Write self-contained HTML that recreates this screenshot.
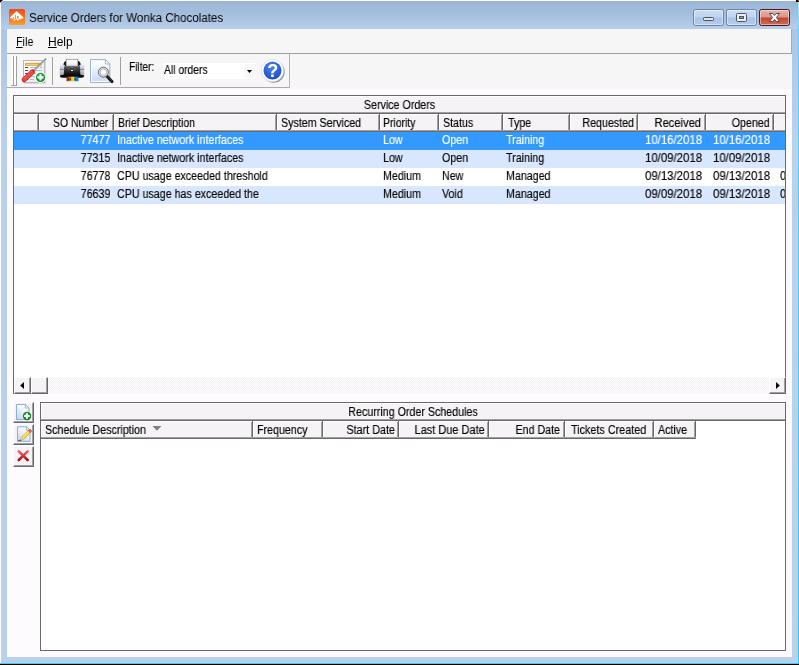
<!DOCTYPE html>
<html lang="en">
<head>
<meta charset="utf-8">
<title>Service Orders for Wonka Chocolates</title>
<style>
html,body{margin:0;padding:0;}
body{width:799px;height:665px;overflow:hidden;position:relative;background:#bad1ec;font-family:"Liberation Sans",sans-serif;font-size:11px;color:#000;}
.abs{position:absolute;}
#win{position:absolute;left:0;top:0;width:799px;height:665px;overflow:hidden;background:#bad1ec;}
#titlegrad{left:1px;top:1px;width:797px;height:28px;background:linear-gradient(#9ab5d4 0,#a5bedd 45%,#b7ceeb 100%);}
#edgeL{left:0;top:0;width:1px;height:663px;background:#fff;}
#edgeT{left:0;top:0;width:799px;height:1px;background:#fff;}
#edgeR{left:798px;top:0;width:1px;height:664px;background:linear-gradient(#b8f2ff 0,#5fd4f6 30px,#2fc6f1 100%);}
#edgeB1{left:0;top:663px;width:799px;height:1px;background:#3ccdf3;}
#edgeB2{left:0;top:664px;width:799px;height:1px;background:#000;}
#title{left:29px;top:11px;font-size:12px;line-height:15px;white-space:nowrap;transform:scaleX(.965);transform-origin:0 0;}
#client{left:7px;top:29px;width:785px;height:628px;background:#fdfbfd;}
#menubar{left:7px;top:29px;width:785px;height:24px;background:#f6f6f6;}
#menuline{left:7px;top:53px;width:785px;height:1px;background:#a0a0a0;}
.menu{position:absolute;top:35px;font-size:12px;line-height:15px;white-space:nowrap;}
.menu u{text-decoration:underline;text-underline-offset:1px;}
#toolbar{left:7px;top:54px;width:785px;height:35px;background:#f6f6f6;}
#toolline{left:7px;top:87px;width:283px;height:1px;background:#a9a9a9;}
#toolright{left:289px;top:54px;width:1px;height:34px;background:#b4b4b4;}
.vsep{position:absolute;width:1px;background:#a0a0a0;}
.cap{position:absolute;top:9px;height:15px;border:1px solid #6d85a8;border-radius:2.5px;background:linear-gradient(#c9dcf3 0,#bed4ef 48%,#a7c3e6 52%,#b3cdee 100%);box-shadow:inset 0 0 0 1px rgba(255,255,255,.45);}
#cclose{border-color:#4a1820;background:linear-gradient(#e8b2a6 0,#dc9485 48%,#c2452e 52%,#cf6d56 100%);}
.grid{position:absolute;background:#fff;}
.dk{background:#696969;position:absolute;}
.btn{position:absolute;left:13px;width:21px;height:21px;background:#f5f3f5;border-left:1px solid #fff;border-top:1px solid #fff;border-right:1px solid #696969;border-bottom:1px solid #696969;box-sizing:border-box;}

.t{position:absolute;font-size:12px;line-height:14px;white-space:nowrap;transform:scaleX(.89);transform-origin:0 0;}
.tr{position:absolute;font-size:12px;line-height:14px;white-space:nowrap;transform:scaleX(.89);transform-origin:100% 0;}
.tc{position:absolute;font-size:12px;line-height:14px;white-space:nowrap;transform:scaleX(.89);transform-origin:50% 0;text-align:center;}
.face{position:absolute;background:#f5f3f5;}
.hcell{position:absolute;box-sizing:border-box;background:#f5f3f5;border-left:1px solid #fff;border-top:1px solid #fff;}
.hcell:before{content:"";position:absolute;right:0;top:-1px;bottom:0;width:1px;background:#696969;}
.hcell:after{content:"";position:absolute;right:1px;top:0;bottom:0;width:1px;background:#a0a0a0;}
.w{color:#fff;}
.t,.tr,.tc,#title,.menu{will-change:transform;}
.t,.tr,.tc{-webkit-text-stroke:.15px currentColor;}
.d{transform:scaleX(.95);}
</style>
</head>
<body>
<div id="win">
<div class="abs" id="titlegrad"></div>
<div class="abs" style="left:1px;top:29px;width:6px;height:110px;background:linear-gradient(#adc6e7,#bad1ec);"></div>
<div class="abs" style="left:792px;top:29px;width:6px;height:110px;background:linear-gradient(#adc6e7,#bad1ec);"></div>
<div class="abs" id="edgeT"></div>
<div class="abs" id="edgeL"></div>
<div class="abs" id="edgeR"></div>
<div class="abs" id="edgeB1"></div>
<div class="abs" id="edgeB2"></div>
<svg class="abs" style="left:0;top:0" width="4" height="4" viewBox="0 0 4 4"><path d="M0 0 L3 0 L0 3 Z" fill="#000"/><path d="M1 2.6 L2.6 1" stroke="#fff" stroke-width=".7"/></svg>
<div class="abs" style="left:796px;top:0;width:3px;height:2px;background:#000;"></div><div class="abs" style="left:798px;top:0;width:1px;height:1px;background:#f08a10;"></div>
<svg class="abs" style="left:9px;top:9px" width="16" height="16" viewBox="0 0 16 16">
<defs><linearGradient id="ag" x1="0" y1="0" x2="0" y2="1"><stop offset="0" stop-color="#f34a1c"/><stop offset=".55" stop-color="#f6741e"/><stop offset="1" stop-color="#f9a02c"/></linearGradient></defs>
<rect x="0" y="0" width="16" height="16" rx="1.5" fill="url(#ag)"/>
<path d="M7.6 2 L14.3 8.3 L14.3 9.6 L12 9.6 L11.5 10.4 L9.6 10.2 L9.4 12 L8.6 10.4 L7.2 10.3 L7 11.6 L6.2 10.3 L4.2 10.4 L3.4 9.6 L1.2 9.2 L1.2 8.3 Z" fill="#fff"/>
<rect x="5.9" y="6" width="1" height="4" fill="#f6862a"/><rect x="7.9" y="7" width="1.6" height="2.6" fill="#f6862a"/><rect x="4" y="8" width="1" height="2" fill="#f8a050"/>
<rect x="4.6" y="11" width="1.2" height="1" fill="#fde3c4"/><rect x="8" y="10.6" width="1" height="1.2" fill="#fff"/>
</svg>
<div class="abs" id="title">Service Orders for Wonka Chocolates</div>
<div class="cap" style="left:693px;width:29px;"><svg class="abs" style="left:9px;top:7px" width="11" height="4" viewBox="0 0 11 4"><rect x=".5" y=".5" width="10" height="3" rx=".8" fill="#e4e4e6" stroke="#4e5560"/></svg></div>
<div class="cap" style="left:726px;width:29px;"><svg class="abs" style="left:9px;top:3px" width="11" height="9" viewBox="0 0 11 9"><rect x=".5" y=".5" width="10" height="8" rx="1" fill="#eceef2" stroke="#4e5560"/><rect x="3.5" y="3.5" width="4" height="2" fill="#86a3cb" stroke="#4e5560"/></svg></div>
<div class="cap" id="cclose" style="left:759px;width:29px;"><svg class="abs" style="left:9px;top:3px" width="11" height="9" viewBox="0 0 11 9"><path d="M0.5 0.5 L3.8 0.5 L5.5 2.5 L7.2 0.5 L10.5 0.5 L7.5 4.5 L10.5 8.5 L7.2 8.5 L5.5 6.5 L3.8 8.5 L0.5 8.5 L3.5 4.5 Z" fill="#fff" stroke="#4f4752" stroke-width="1" stroke-linejoin="round"/></svg></div>
<div class="abs" id="client"></div>
<div class="abs" id="menubar"></div>
<div class="abs" id="menuline"></div>
<div class="abs" style="left:791px;top:29px;width:1px;height:25px;background:#a8a8a8;"></div>
<div class="menu" style="left:16px;transform:scaleX(.9);transform-origin:0 0;"><u>F</u>ile</div>
<div class="menu" style="left:48px"><u>H</u>elp</div>
<div class="abs" id="toolbar"></div>
<div class="abs" id="toolline"></div>
<div class="abs" id="toolright"></div>
<div class="abs" style="left:11px;top:56px;width:2px;height:29px;background:#fff;"></div><div class="abs" style="left:14px;top:56px;width:2px;height:29px;background:#fff;"></div><div class="vsep" style="left:13px;top:56px;height:30px;"></div><div class="vsep" style="left:16px;top:56px;height:30px;"></div><div class="abs" style="left:11px;top:85px;width:6px;height:1px;background:#a0a0a0;"></div>
<div class="vsep" style="left:52px;top:57px;height:28px;"></div><div class="vsep" style="left:120px;top:57px;height:28px;"></div>
<svg class="abs" style="left:20px;top:56px" width="30" height="30" viewBox="0 0 30 30">
<defs><linearGradient id="i1p" x1="0" y1="0" x2="1" y2="1"><stop offset="0" stop-color="#ffffff"/><stop offset="1" stop-color="#e4e6ee"/></linearGradient>
<linearGradient id="i1r" x1="0" y1="0" x2="1" y2="1"><stop offset="0" stop-color="#f2564a"/><stop offset="1" stop-color="#b81818"/></linearGradient>
<radialGradient id="i1g" cx=".4" cy=".35" r=".7"><stop offset="0" stop-color="#30b848"/><stop offset="1" stop-color="#0a7a1c"/></radialGradient></defs>
<rect x="4" y="5" width="21.5" height="22.5" fill="#9a9aa4" opacity=".55"/>
<rect x="3.5" y="4.5" width="21" height="22" fill="url(#i1p)" stroke="#b4b6c2"/>
<rect x="5" y="6.8" width="16.6" height="3" fill="#dfa62e"/><rect x="6" y="7.9" width="12" height=".9" fill="#f3d88c"/>
<g stroke="#4a4c58" stroke-width="1"><path d="M5 11.5h3.2M5 14.5h3.2M5 17.5h3.2M5 20.5h3.2M5 23.5h3.2"/></g>
<g stroke="#b9bcc8" stroke-width="1"><path d="M10 11.5h9M20 11.5h2.2M10 14.5h12M10 17.5h6M10 20.5h5M10 23.5h4"/></g>
<path d="M13.2 15.2 L25.6 3.2" stroke="#7f8d94" stroke-width="1.7" stroke-linecap="round"/>
<path d="M14 14.6 L25.2 3.6" stroke="#c8d2d6" stroke-width=".6"/>
<path d="M4.2 23.6 L12.4 16" stroke="#c4201c" stroke-width="5" stroke-linecap="round"/>
<path d="M4.2 23.4 L12.2 16" stroke="#e8483c" stroke-width="3.2" stroke-linecap="round"/>
<path d="M3.6 22.6 L11.6 15.2 M5.2 24.6 L13 17.2" stroke="#f6a29a" stroke-width=".8" stroke-dasharray="1 1"/>
<circle cx="20.5" cy="21.4" r="5.6" fill="#fff"/><circle cx="20.5" cy="21.4" r="4.6" fill="url(#i1g)"/>
<path d="M19.4 18.3h2.2v2h2v2.2h-2v2h-2.2v-2h-2v-2.2h2z" fill="#fff"/>
</svg>
<svg class="abs" style="left:56px;top:56px" width="30" height="30" viewBox="0 0 30 30">
<defs><linearGradient id="p1" x1="0" y1="0" x2="0" y2="1"><stop offset="0" stop-color="#ffffff"/><stop offset=".6" stop-color="#f4f4f6"/><stop offset="1" stop-color="#a8a8ae"/></linearGradient>
<linearGradient id="p2" x1="0" y1="0" x2="0" y2="1"><stop offset="0" stop-color="#5a5a62"/><stop offset=".5" stop-color="#2a2a2e"/><stop offset="1" stop-color="#050505"/></linearGradient>
<linearGradient id="p3" x1="0" y1="0" x2="0" y2="1"><stop offset="0" stop-color="#e6e8ee"/><stop offset=".36" stop-color="#c0c2ca"/><stop offset=".42" stop-color="#7c7e86"/><stop offset=".5" stop-color="#c8cad2"/><stop offset="1" stop-color="#9a9ca4"/></linearGradient>
<linearGradient id="p4" x1="0" y1="0" x2="1" y2="0"><stop offset="0" stop-color="#7a2a08"/><stop offset=".2" stop-color="#d84a10"/><stop offset=".45" stop-color="#f8c818"/><stop offset=".6" stop-color="#f0e020"/><stop offset=".7" stop-color="#2a90d8"/><stop offset="1" stop-color="#1a68c8"/></linearGradient></defs>
<path d="M7.4 10.6 Q6.8 7 9.6 5 L10.4 5 L10.4 10.6 Z M24.8 10.6 Q25.4 7 22.6 5 L21.8 5 L21.8 10.6 Z" fill="#141416"/>
<rect x="10.2" y="3.3" width="11.6" height="8" fill="url(#p1)" stroke="#85858c" stroke-width=".7"/>
<rect x="3.8" y="8.8" width="5" height="11.4" rx="1" fill="url(#p3)"/><rect x="23.4" y="8.8" width="4.8" height="11.4" rx="1" fill="url(#p3)"/>
<path d="M8.2 10.2 L24 10.2 L24.4 19.8 L7.8 19.8 Z" fill="url(#p2)"/>
<rect x="12" y="11.6" width="2.2" height="2.6" fill="#4c4c54"/><rect x="17.8" y="11.6" width="2.2" height="2.6" fill="#4c4c54"/><rect x="14.6" y="11" width="3" height="1" fill="#6c6c74"/>
<rect x="15" y="14" width="2" height="1" fill="#f4f4f4"/>
<path d="M3.8 20 Q3.8 19.2 5 19.2 L8 18.4 L24.2 18.4 L27 19.2 Q28.2 19.2 28.2 20 Q28.2 21.7 25.4 21.7 L6.6 21.7 Q3.8 21.7 3.8 20 Z" fill="#0a0a0a"/>
<rect x="10.6" y="20.7" width="11.8" height="4.6" fill="url(#p4)"/>
<path d="M11.4 21.6 l1.8 1.4 l-1 1.8 z M14 21.2 l1.2 2.6 l-1.6 .8z M19 21 l1 3.6 l-1.6-.6z" fill="#2a1208" opacity=".8"/>
<rect x="10.6" y="25.2" width="11.8" height=".6" fill="#dfe3ec"/>
</svg>
<svg class="abs" style="left:86px;top:56px" width="30" height="30" viewBox="0 0 30 30">
<defs><linearGradient id="v1" x1="0" y1="0" x2="0" y2="1"><stop offset="0" stop-color="#ffffff"/><stop offset=".3" stop-color="#f2f5fd"/><stop offset="1" stop-color="#c6d6f6"/></linearGradient>
</defs>
<path d="M4.5 3.6 L19.4 3.6 L23.8 8 L23.8 26.4 L4.5 26.4 Z" fill="url(#v1)" stroke="#97b1c6" stroke-width="1"/>
<path d="M5.5 4.6 L5.5 25.4 L22.8 25.4" fill="none" stroke="#fff" stroke-width="1"/>
<path d="M19.4 3.6 L19.4 8 L23.8 8 Z" fill="#f8fafd" stroke="#97b1c6" stroke-width=".9" stroke-linejoin="round"/>
<path d="M20.6 19.8 L26 25.6" stroke="#111" stroke-width="3" stroke-linecap="round"/>
<path d="M21.6 20.2 L26 25" stroke="#555" stroke-width=".7" stroke-linecap="round"/>
<circle cx="17.4" cy="16.2" r="5" fill="#e2e2e2" stroke="#5c5c5c" stroke-width=".9"/><circle cx="17.4" cy="16.2" r="3.2" fill="#fff" stroke="#a4a4a4" stroke-width=".8"/>
</svg>
<div class="t" style="left:129px;top:60px;transform:scaleX(.84);">Filter:</div>
<div class="abs" style="left:164px;top:63px;width:91px;height:16px;background:#fff;"></div>
<div class="abs" style="left:245px;top:64px;width:10px;height:14px;background:#f8f8f8;"></div>
<div class="t" style="left:164px;top:63px;transform:scaleX(.86);">All orders</div>
<svg class="abs" style="left:247px;top:70px" width="5" height="3" viewBox="0 0 5 3"><path d="M0 0 L5 0 L2.5 3 Z" fill="#000"/></svg>
<svg class="abs" style="left:258px;top:56px;will-change:transform" width="30" height="30" viewBox="0 0 30 30">
<defs><radialGradient id="h1" cx=".45" cy=".3" r=".8"><stop offset="0" stop-color="#4f86ea"/><stop offset=".6" stop-color="#2a5fd2"/><stop offset="1" stop-color="#1c49b4"/></radialGradient></defs>
<circle cx="15.7" cy="15.8" r="11" fill="#77777f" opacity=".8"/>
<circle cx="14.5" cy="14.6" r="11.2" fill="#fff" stroke="#c4d0e8" stroke-width=".6"/>
<circle cx="14.5" cy="14.6" r="9" fill="url(#h1)"/>
<text x="14.7" y="21" text-anchor="middle" font-family="Liberation Sans, sans-serif" font-weight="bold" font-size="18" fill="#fff">?</text>
</svg>
<div class="grid" style="left:13px;top:95px;width:773px;height:299px;"></div>
<div class="dk" style="left:13px;top:95px;width:773px;height:1px;"></div>
<div class="dk" style="left:13px;top:95px;width:1px;height:299px;"></div>
<div class="dk" style="left:785px;top:95px;width:1px;height:299px;"></div>
<div class="face" style="left:14px;top:96px;width:771px;height:16px;border-top:1px solid #fff;border-left:1px solid #fff;box-sizing:border-box;"></div>
<div class="abs" style="left:14px;top:112px;width:771px;height:1px;background:#a0a0a0;"></div>
<div class="abs" style="left:14px;top:113px;width:771px;height:1px;background:#696969;"></div>
<div class="tc" style="left:14px;width:771px;top:98px;">Service Orders</div>
<div class="abs" style="left:14px;top:130px;width:771px;height:1px;background:#a0a0a0;"></div>
<div class="abs" style="left:14px;top:131px;width:771px;height:1px;background:#696969;"></div>
<div class="hcell" style="left:14px;top:114px;width:25px;height:16px;"></div>
<div class="hcell" style="left:39px;top:114px;width:75px;height:16px;"></div>
<div class="tr" style="right:690.5px;top:116px;transform:scaleX(.875);">SO Number</div>
<div class="hcell" style="left:114px;top:114px;width:163px;height:16px;"></div>
<div class="t" style="left:118px;top:116px;transform:scaleX(.875);">Brief Description</div>
<div class="hcell" style="left:277px;top:114px;width:103px;height:16px;"></div>
<div class="t" style="left:281px;top:116px;">System Serviced</div>
<div class="hcell" style="left:380px;top:114px;width:59px;height:16px;"></div>
<div class="t" style="left:383px;top:116px;transform:scaleX(.87);">Priority</div>
<div class="hcell" style="left:439px;top:114px;width:64px;height:16px;"></div>
<div class="t" style="left:442.5px;top:116px;">Status</div>
<div class="hcell" style="left:503px;top:114px;width:67px;height:16px;"></div>
<div class="t" style="left:508px;top:116px;">Type</div>
<div class="hcell" style="left:570px;top:114px;width:68px;height:16px;"></div>
<div class="tr" style="right:165px;top:116px;">Requested</div>
<div class="hcell" style="left:638px;top:114px;width:68px;height:16px;"></div>
<div class="tr" style="right:97.5px;top:116px;transform:scaleX(.93);">Received</div>
<div class="hcell" style="left:706px;top:114px;width:68px;height:16px;"></div>
<div class="tr" style="right:29px;top:116px;">Opened</div>
<div class="face" style="left:774px;top:114px;width:11px;height:16px;box-sizing:border-box;border-left:1px solid #fff;border-top:1px solid #fff;"></div>
<div class="abs" style="left:14px;top:132px;width:771px;height:18px;background:#3399ff;overflow:hidden;">
<div class="tr w" style="right:675px;top:1px;">77477</div>
<div class="t w" style="left:102.5px;top:1px;">Inactive network interfaces</div>
<div class="t w" style="left:368.5px;top:1px;">Low</div>
<div class="t w" style="left:427.5px;top:1px;">Open</div>
<div class="t w" style="left:492px;top:1px;">Training</div>
<div class="tr w d" style="right:83px;top:1px;">10/16/2018</div>
<div class="tr w d" style="right:15px;top:1px;">10/16/2018</div>
</div>
<div class="abs" style="left:14px;top:150px;width:771px;height:18px;background:#d8e7fe;overflow:hidden;">
<div class="tr" style="right:675px;top:1px;">77315</div>
<div class="t" style="left:102.5px;top:1px;">Inactive network interfaces</div>
<div class="t" style="left:368.5px;top:1px;">Low</div>
<div class="t" style="left:427.5px;top:1px;">Open</div>
<div class="t" style="left:492px;top:1px;">Training</div>
<div class="tr d" style="right:83px;top:1px;">10/09/2018</div>
<div class="tr d" style="right:15px;top:1px;">10/09/2018</div>
</div>
<div class="abs" style="left:14px;top:168px;width:771px;height:18px;background:#ffffff;overflow:hidden;">
<div class="tr" style="right:675px;top:1px;">76778</div>
<div class="t" style="left:102.5px;top:1px;">CPU usage exceeded threshold</div>
<div class="t" style="left:368.5px;top:1px;">Medium</div>
<div class="t" style="left:427.5px;top:1px;">New</div>
<div class="t" style="left:492px;top:1px;">Managed</div>
<div class="tr d" style="right:83px;top:1px;">09/13/2018</div>
<div class="tr d" style="right:15px;top:1px;">09/13/2018</div>
<div class="t" style="left:766px;top:1px;">09/13/2018</div>
</div>
<div class="abs" style="left:14px;top:186px;width:771px;height:18px;background:#d8e7fe;overflow:hidden;">
<div class="tr" style="right:675px;top:1px;">76639</div>
<div class="t" style="left:102.5px;top:1px;">CPU usage has exceeded the</div>
<div class="t" style="left:368.5px;top:1px;">Medium</div>
<div class="t" style="left:427.5px;top:1px;">Void</div>
<div class="t" style="left:492px;top:1px;">Managed</div>
<div class="tr d" style="right:83px;top:1px;">09/09/2018</div>
<div class="tr d" style="right:15px;top:1px;">09/13/2018</div>
<div class="t" style="left:766px;top:1px;">09/13/2018</div>
</div>
<div class="abs" style="left:14px;top:377px;width:771px;height:17px;background:repeating-conic-gradient(#fff 0 25%,#f0f0f0 0 50%) 0 0/2px 2px;"></div>
<div class="abs" style="left:14px;top:377px;width:17px;height:17px;background:#f5f3f5;box-sizing:border-box;border-left:1px solid #fff;border-top:1px solid #fff;border-right:1px solid #696969;border-bottom:1px solid #696969;"><div class="abs" style="right:0;bottom:0;top:0;width:1px;background:#a0a0a0;"></div><div class="abs" style="left:0;right:0;bottom:0;height:1px;background:#a0a0a0;"></div><svg class="abs" style="left:5px;top:4px" width="4" height="7" viewBox="0 0 4 7"><path d="M4 0 L4 7 L0.2 3.5 Z" fill="#000"/></svg></div>
<div class="abs" style="left:31px;top:377px;width:17px;height:17px;background:#f5f3f5;box-sizing:border-box;border-left:1px solid #fff;border-top:1px solid #fff;border-right:1px solid #696969;border-bottom:1px solid #696969;"><div class="abs" style="right:0;bottom:0;top:0;width:1px;background:#a0a0a0;"></div><div class="abs" style="left:0;right:0;bottom:0;height:1px;background:#a0a0a0;"></div></div>
<div class="abs" style="left:769px;top:377px;width:17px;height:17px;background:#f5f3f5;box-sizing:border-box;border-left:1px solid #fff;border-top:1px solid #fff;border-right:1px solid #696969;border-bottom:1px solid #696969;"><div class="abs" style="right:0;bottom:0;top:0;width:1px;background:#a0a0a0;"></div><div class="abs" style="left:0;right:0;bottom:0;height:1px;background:#a0a0a0;"></div><svg class="abs" style="left:6px;top:4px" width="4" height="7" viewBox="0 0 4 7"><path d="M0 0 L0 7 L3.8 3.5 Z" fill="#000"/></svg></div>
<div class="grid" style="left:40px;top:402px;width:746px;height:249px;"></div>
<div class="dk" style="left:40px;top:402px;width:746px;height:1px;"></div>
<div class="dk" style="left:40px;top:402px;width:1px;height:249px;"></div>
<div class="dk" style="left:785px;top:402px;width:1px;height:249px;"></div>
<div class="dk" style="left:40px;top:650px;width:746px;height:1px;"></div>
<div class="face" style="left:41px;top:403px;width:744px;height:16px;border-top:1px solid #fff;border-left:1px solid #fff;box-sizing:border-box;"></div>
<div class="abs" style="left:41px;top:419px;width:744px;height:1px;background:#a0a0a0;"></div>
<div class="abs" style="left:41px;top:420px;width:744px;height:1px;background:#696969;"></div>
<div class="tc" style="left:41px;width:744px;top:405px;">Recurring Order Schedules</div>
<div class="hcell" style="left:41px;top:421px;width:212px;height:18px;"></div>
<div class="abs" style="left:41px;top:437px;width:212px;height:1px;background:#a0a0a0;"></div>
<div class="abs" style="left:41px;top:438px;width:212px;height:1px;background:#696969;"></div>
<div class="t" style="left:45px;top:423px;">Schedule Description</div>
<div class="hcell" style="left:253px;top:421px;width:70px;height:18px;"></div>
<div class="abs" style="left:253px;top:437px;width:70px;height:1px;background:#a0a0a0;"></div>
<div class="abs" style="left:253px;top:438px;width:70px;height:1px;background:#696969;"></div>
<div class="t" style="left:257px;top:423px;">Frequency</div>
<div class="hcell" style="left:323px;top:421px;width:76px;height:18px;"></div>
<div class="abs" style="left:323px;top:437px;width:76px;height:1px;background:#a0a0a0;"></div>
<div class="abs" style="left:323px;top:438px;width:76px;height:1px;background:#696969;"></div>
<div class="tr" style="right:403.5px;top:423px;transform:scaleX(.9);">Start Date</div>
<div class="hcell" style="left:399px;top:421px;width:90px;height:18px;"></div>
<div class="abs" style="left:399px;top:437px;width:90px;height:1px;background:#a0a0a0;"></div>
<div class="abs" style="left:399px;top:438px;width:90px;height:1px;background:#696969;"></div>
<div class="tr" style="right:314.5px;top:423px;transform:scaleX(.915);">Last Due Date</div>
<div class="hcell" style="left:489px;top:421px;width:76px;height:18px;"></div>
<div class="abs" style="left:489px;top:437px;width:76px;height:1px;background:#a0a0a0;"></div>
<div class="abs" style="left:489px;top:438px;width:76px;height:1px;background:#696969;"></div>
<div class="tr" style="right:239px;top:423px;">End Date</div>
<div class="hcell" style="left:565px;top:421px;width:89px;height:18px;"></div>
<div class="abs" style="left:565px;top:437px;width:89px;height:1px;background:#a0a0a0;"></div>
<div class="abs" style="left:565px;top:438px;width:89px;height:1px;background:#696969;"></div>
<div class="t" style="left:571px;top:423px;transform:scaleX(.9);">Tickets Created</div>
<div class="hcell" style="left:654px;top:421px;width:42px;height:18px;"></div>
<div class="abs" style="left:654px;top:437px;width:42px;height:1px;background:#a0a0a0;"></div>
<div class="abs" style="left:654px;top:438px;width:42px;height:1px;background:#696969;"></div>
<div class="t" style="left:658px;top:423px;">Active</div>
<svg class="abs" style="left:152px;top:426px" width="10" height="5" viewBox="0 0 10 5"><path d="M0.5 0 L9.5 0 L5 4.8 Z" fill="#808080"/></svg>
<div class="btn" style="top:402px;"><div class="abs" style="right:0;top:0;bottom:0;width:1px;background:#a0a0a0;"></div><div class="abs" style="left:0;right:0;bottom:0;height:1px;background:#a0a0a0;"></div><svg class="abs" style="left:-1px;top:-1px" width="21" height="21" viewBox="0 0 21 21">
<defs><linearGradient id="b0g" x1=".8" y1="0" x2=".2" y2="1"><stop offset="0" stop-color="#ffffff"/><stop offset=".4" stop-color="#f0f4fc"/><stop offset="1" stop-color="#c4d5f3"/></linearGradient>
<radialGradient id="b0p" cx=".4" cy=".35" r=".7"><stop offset="0" stop-color="#2aa840"/><stop offset="1" stop-color="#087018"/></radialGradient></defs>
<path d="M3.5 2.5 L12.4 2.5 L16 6 L16 17.5 L3.5 17.5 Z" fill="url(#b0g)" stroke="#8eb0c9"/>
<path d="M12.4 2.5 L12.4 6 L16 6 Z" fill="#f6f9fd" stroke="#8eb0c9" stroke-width=".8" stroke-linejoin="round"/>
<circle cx="14" cy="14" r="4.2" fill="url(#b0p)"/>
<path d="M13 11.2h2v1.8h1.8v2h-1.8v1.8h-2v-1.8h-1.8v-2h1.8z" fill="#fff"/>
</svg></div>
<div class="btn" style="top:424px;"><div class="abs" style="right:0;top:0;bottom:0;width:1px;background:#a0a0a0;"></div><div class="abs" style="left:0;right:0;bottom:0;height:1px;background:#a0a0a0;"></div><svg class="abs" style="left:-1px;top:-1px" width="21" height="21" viewBox="0 0 21 21">
<defs><linearGradient id="b1g" x1=".8" y1="0" x2=".2" y2="1"><stop offset="0" stop-color="#ffffff"/><stop offset=".4" stop-color="#f0f4fc"/><stop offset="1" stop-color="#c4d5f3"/></linearGradient></defs>
<path d="M4.5 2.8 L13.4 2.8 L17 6.3 L17 17.3 L4.5 17.3 Z" fill="url(#b1g)" stroke="#8eb0c9"/>
<path d="M13.4 2.8 L13.4 6.3 L17 6.3 Z" fill="#f6f9fd" stroke="#8eb0c9" stroke-width=".8" stroke-linejoin="round"/>
<path d="M8.2 13.4 L15.2 6.6 L17.4 8.8 L10.4 15.6 Z" fill="#f7d548" stroke="#c79a1c" stroke-width=".6"/>
<path d="M9.6 13.2 L15.6 7.4" stroke="#fbf0a8" stroke-width=".8"/>
<path d="M15.2 6.6 L16.2 5.6 Q17 5 17.8 5.8 L18.4 6.4 Q19 7.2 18.4 7.8 L17.4 8.8 Z" fill="#e2605a" stroke="#b84440" stroke-width=".5"/>
<path d="M8.2 13.4 L10.4 15.6 L6.8 16.8 Z" fill="#ecd2a0"/><path d="M7.6 15.2 L8.8 16.2 L6.6 17 Z" fill="#222"/>
<rect x="5.4" y="16" width="1.2" height="1.2" fill="#333"/>
</svg></div>
<div class="btn" style="top:446px;"><div class="abs" style="right:0;top:0;bottom:0;width:1px;background:#a0a0a0;"></div><div class="abs" style="left:0;right:0;bottom:0;height:1px;background:#a0a0a0;"></div><svg class="abs" style="left:-1px;top:-1px" width="21" height="21" viewBox="0 0 21 21">
<defs><linearGradient id="b2g" x1="0" y1="0" x2="0" y2="1"><stop offset="0" stop-color="#e8606c"/><stop offset=".5" stop-color="#d03c44"/><stop offset="1" stop-color="#9c1414"/></linearGradient></defs>
<path d="M5.8 5.4 L14.6 14 M14.6 5.4 L5.8 14" stroke="url(#b2g)" stroke-width="2.6" stroke-linecap="round" fill="none"/>
</svg></div>
</div>
</body>
</html>
